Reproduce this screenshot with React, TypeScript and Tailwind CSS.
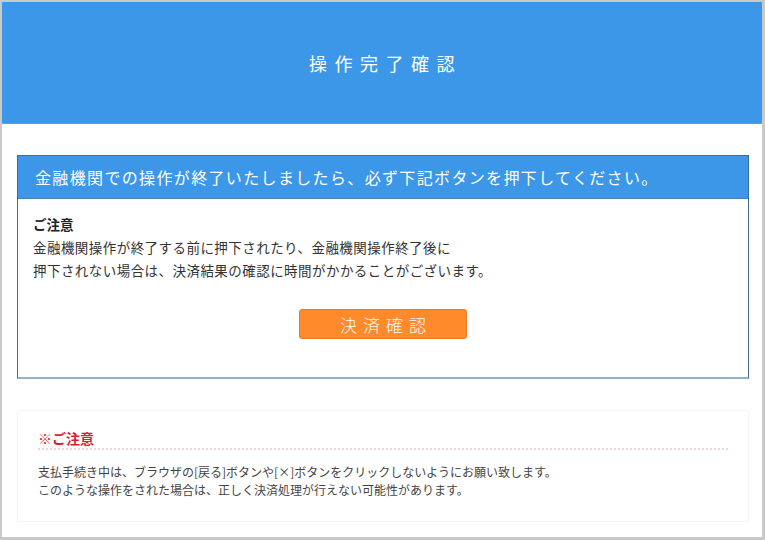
import React from 'react';

const jp = { fontFamily: '"Noto Sans CJK JP", "Noto Sans", sans-serif' };

function ConfirmBox() {
    return (
        <div className="ml-[15px] mt-[31px] w-[732px] border border-[#3d6d8f] border-b-2 border-b-[#8db4c8] bg-white">
            <div className="h-[43px] bg-[#3d97e8] border-b border-[#4a82ad] flex items-center pl-[17px]">
                <p className="text-white text-[16px] tracking-[1.35px] leading-none">
                    金融機関での操作が終了いたしましたら、必ず下記ボタンを押下してください。
                </p>
            </div>
            <div className="pt-[14px] pl-[15px] pb-[38px]">
                <p className="text-[13.5px] leading-[23px] font-bold text-[#222]">ご注意</p>
                <p className="text-[13.5px] leading-[23px] text-[#333] tracking-[0.45px]">
                    金融機関操作が終了する前に押下されたり、金融機関操作終了後に
                </p>
                <p className="text-[13.5px] leading-[23px] text-[#333] tracking-[0.45px]">
                    押下されない場合は、決済結果の確認に時間がかかることがございます。
                </p>
                <div className="flex justify-center mt-[27px] pr-[15px]">
                    <button className="w-[168px] h-[30px] bg-[#ff8a2c] border border-[#e97a22] rounded-[3px] text-[#fff8f0] text-[17px] font-light tracking-[6px] pl-[6px] leading-none">
                        決済確認
                    </button>
                </div>
            </div>
        </div>
    );
}

function NoticeBox() {
    return (
        <div className="ml-[15px] mt-[31px] w-[732px] border border-[#f4f4f9] px-[20px] pt-[17px] pb-[22px]">
            <p className="text-[14px] leading-[20px] font-bold text-[#e01a2e] border-b-2 border-dotted border-[#ecd2e2]">
                ※ご注意
            </p>
            <div className="mt-[13px] text-[12px] leading-[18px] text-[#444]">
                <p>支払手続き中は、ブラウザの[戻る]ボタンや[×]ボタンをクリックしないようにお願い致します。</p>
                <p>このような操作をされた場合は、正しく決済処理が行えない可能性があります。</p>
            </div>
        </div>
    );
}

export default function App() {
    return (
        <div style={jp} className="w-[765px] h-[540px] bg-white border-2 border-r-[3px] border-b-[3px] border-[#c9c9c9] overflow-hidden">
            <header className="h-[122px] bg-[#3d97e8] border-b border-[#5e9fd6] flex items-center justify-center">
                <h1 className="text-white text-[18px] tracking-[7.5px] pl-[7px] leading-none font-normal">操作完了確認</h1>
            </header>
            <ConfirmBox />
            <NoticeBox />
        </div>
    );
}
